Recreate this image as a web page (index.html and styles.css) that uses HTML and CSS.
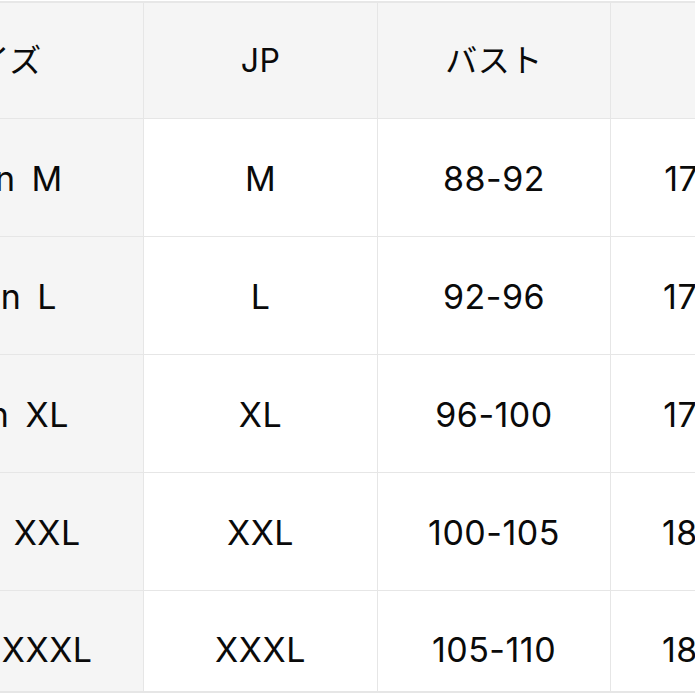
FILE: index.html
```html
<!DOCTYPE html>
<html lang="ja">
<head>
<meta charset="utf-8">
<title>サイズ表</title>
<link rel="stylesheet" href="styles.css">
</head>
<body>
<div class="size-table">
  <div class="cell head first">サイズ</div>
  <div class="cell head">JP</div>
  <div class="cell head">バスト</div>
  <div class="cell head">身長</div>

  <div class="cell first">Asian M</div>
  <div class="cell">M</div>
  <div class="cell">88-92</div>
  <div class="cell">170-175</div>

  <div class="cell first">Asian L</div>
  <div class="cell">L</div>
  <div class="cell">92-96</div>
  <div class="cell">175-180</div>

  <div class="cell first">Asian XL</div>
  <div class="cell">XL</div>
  <div class="cell">96-100</div>
  <div class="cell">178-183</div>

  <div class="cell first">Asian XXL</div>
  <div class="cell">XXL</div>
  <div class="cell">100-105</div>
  <div class="cell">180-185</div>

  <div class="cell first last">Asian XXXL</div>
  <div class="cell last">XXXL</div>
  <div class="cell last">105-110</div>
  <div class="cell last">185-190</div>
</div>
</body>
</html>
```

FILE: styles.css
```css
html, body {
  margin: 0;
  padding: 0;
  background: #ffffff;
  overflow: hidden;
}

body {
  width: 695px;
  height: 695px;
  font-family: "Inter", "Noto Sans CJK JP", sans-serif;
  color: #0a0a0a;
}

.size-table {
  display: grid;
  grid-template-columns: 300px 234px 233px 234px;
  grid-template-rows: 116px 118px 118px 118px 118px 102px;
  width: max-content;
  margin-left: -156px;
  margin-top: 1px;
  border-top: 2px solid #e7e7e7;
}

.cell {
  box-sizing: border-box;
  display: flex;
  align-items: center;
  justify-content: center;
  border-right: 1px solid #e6e6e6;
  border-bottom: 1px solid #e6e6e6;
  background: #ffffff;
  font-size: 34px;
  font-weight: 400;
  letter-spacing: 0.5px;
  white-space: nowrap;
  line-height: 1;
  padding-top: 2px;
}

.head {
  padding-top: 0;
  font-size: 32px;
  letter-spacing: 0.5px;
}

.head,
.first {
  background: #f5f5f5;
}

.first {
  word-spacing: 6px;
}

.last {
  padding-top: 18px;
  border-bottom: 2px solid #e6e6e6;
}
```
